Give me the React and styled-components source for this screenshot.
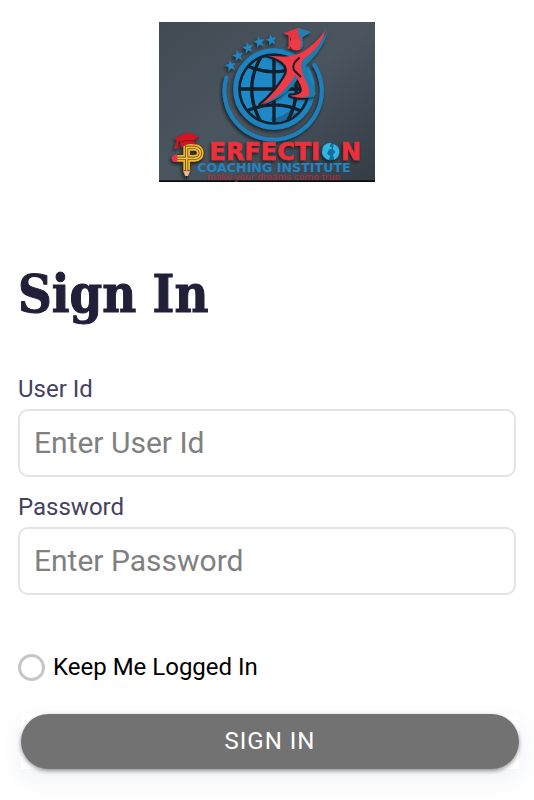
import React, {useState} from 'react';
import styled, {createGlobalStyle} from 'styled-components';

const GlobalStyle = createGlobalStyle`
  * {
    box-sizing: border-box;
  }
  body {
    margin: 0;
    background: #ffffff;
    font-family: Roboto, 'Liberation Sans', sans-serif;
  }
`;

const Page = styled.main`
  padding: 22px 18px 32px;
`;

const Logo = styled.svg`
  display: block;
  width: 216px;
  height: 160px;
  margin: 0 auto;
`;

const Title = styled.h1`
  margin: 76px 0 44px;
  font-family: 'Roboto Slab', 'DejaVu Serif Condensed', 'DejaVu Serif', serif;
  font-size: 52px;
  font-weight: 700;
  line-height: 72px;
  color: #222039;
  -webkit-text-stroke: 1px #222039;
`;

const Field = styled.div`
  display: flex;
  flex-direction: column;
  margin-bottom: 15px;
`;

const Label = styled.label`
  font-size: 24px;
  line-height: 30px;
  margin-bottom: 5px;
  color: #444260;
`;

const TextInput = styled.input`
  width: 100%;
  height: 68px;
  padding: 0 14px 2px;
  border: 2px solid #e4e4e4;
  border-radius: 10px;
  background: #ffffff;
  font-family: inherit;
  font-size: 30px;
  color: #222039;
  outline: none;
  &::placeholder {
    color: #808080;
    opacity: 1;
  }
`;

const KeepRow = styled.label`
  display: flex;
  align-items: center;
  gap: 8px;
  margin-top: 56px;
  font-size: 24px;
  line-height: 32px;
  color: #000000;
`;

const RoundCheck = styled.input`
  appearance: none;
  width: 27px;
  height: 27px;
  margin: 0;
  border: 3px solid #c6c6c6;
  border-radius: 50%;
  background: #ffffff;
  &:checked {
    background: #727272;
  }
`;

const Actions = styled.div`
  margin: 31px -3px 0 3px;
  background: #ffffff;
  box-shadow: 0 8px 24px rgba(120, 140, 190, 0.13);
`;

const SubmitButton = styled.button`
  display: block;
  width: 100%;
  height: 55px;
  padding: 0 0 2px;
  border: 0;
  border-radius: 28px;
  background: #727272;
  box-shadow: 0 2px 4px rgba(0, 0, 0, 0.4);
  font-family: inherit;
  font-size: 24px;
  letter-spacing: 1px;
  text-transform: uppercase;
  color: #ffffff;
`;

const STAR = 'M0-17 4-6 16-5 7 3 10 15 0 8-10 15-7 3-16-5-4-6Z';
const stars = [
  [239, 152],
  [261, 122],
  [291, 98],
  [325, 81],
  [361, 75],
];

const InstituteLogo = () => (
  <Logo viewBox="24 21 648 480" role="img" aria-label="Perfection Coaching Institute">
    <defs>
      <linearGradient id="slate" x1="0" y1="0" x2="1" y2="1">
        <stop offset="0" stopColor="#414b54" />
        <stop offset="0.5" stopColor="#4a555f" />
        <stop offset="1" stopColor="#343c45" />
      </linearGradient>
      <filter id="drop" x="-10%" y="-10%" width="120%" height="125%">
        <feDropShadow dx="-4" dy="6" stdDeviation="4" floodColor="#0c1219" floodOpacity="0.8" />
      </filter>
      <clipPath id="globe">
        <circle cx="369" cy="222" r="100" />
      </clipPath>
    </defs>
    <rect x="24" y="21" width="648" height="480" fill="url(#slate)" />
    <rect x="24" y="496" width="648" height="5" fill="#07090c" />

    <g filter="url(#drop)">
      {stars.map(([x, y]) => (
        <path key={x} d={STAR} fill="#2386c2" transform={`translate(${x} ${y}) rotate(-12)`} />
      ))}
      <path
        d="M226 188A146 146 0 1 0 490 150"
        fill="none"
        stroke="#1b80bd"
        strokeWidth="12"
        strokeLinecap="round"
      />
      <circle cx="369" cy="222" r="115" fill="#18232d" stroke="#1d83c0" strokeWidth="15" />
    </g>
    <g clipPath="url(#globe)">
      <circle cx="369" cy="222" r="100" fill="#1f88c6" />
      <path d="M360 309Q390 312 424 280L445 320 369 330Z" fill="#17699f" />
      <g fill="none" stroke="#131f2a" strokeWidth="10">
        <path d="M369 118V326M262 222H475" />
        <path d="M335 118Q269 222 335 330M403 118Q469 222 403 330" />
        <path d="M285 151Q369 190 453 151M281 291Q369 248 457 291" />
      </g>
    </g>

    {/* dark edge keeps the figure apart from the globe */}
    <path
      d="M524 46C511 90 486 113 455 135C446 151 454 178 463 194C474 213 476 233 474 242C463 248 440 250 418 242C443 241 457 234 452 220C449 204 439 194 433 180C413 216 382 250 329 269C358 247 392 206 406 177C417 151 387 130 346 121C382 127 410 127 433 120C475 106 501 74 524 46Z"
      fill="none"
      stroke="#18232d"
      strokeWidth="14"
      strokeLinejoin="round"
      clipPath="url(#globe)"
    />
    <g filter="url(#drop)">
      <path
        d="M524 52C508 101 486 124 459 151C456 181 484 211 488 238C485 248 462 250 439 247C458 240 467 231 462 221C452 205 444 195 438 184C421 219 382 252 329 269C360 250 395 206 406 177C417 151 387 130 348 123C384 126 416 127 435 121C475 112 501 76 524 52Z"
        fill="#1b7bad"
        transform="translate(6 0)"
      />
      <path
        d="M524 46C511 90 486 113 455 135C446 151 454 178 463 194C474 213 476 233 474 242C463 248 440 250 418 242C443 241 457 234 452 220C449 204 439 194 433 180C413 216 382 250 329 269C358 247 392 206 406 177C417 151 387 130 346 121C382 127 410 127 433 120C475 106 501 74 524 46Z"
        fill="#ee3a46"
      />
      <path d="M446 128Q420 146 429 166L450 186" fill="none" stroke="#251d2a" strokeWidth="6" />
      <circle cx="436" cy="86" r="20" fill="#ee3a46" />
      <path d="M446 68Q464 80 452 99L446 103Q456 84 446 68Z" fill="#1b7bad" />
      <path d="M398 55 440 39 481 51 454 66V76Q437 66 421 76L417 63Z" fill="#e53642" />
      <path d="M440 39 481 51 454 66V76L446 69Z" fill="#1b83b5" />
      <path d="M413 60V94L409 100 417 101V62Z" fill="#e53642" />
    </g>

    <g filter="url(#drop)">
      <text
        x="508"
        y="434"
        textAnchor="end"
        fontFamily="'DejaVu Sans', sans-serif"
        fontSize="72"
        fontWeight="700"
        fill="#e9303b"
        stroke="#e9303b"
        strokeWidth="2"
      >
        ERFECTI
      </text>
      <text
        x="571"
        y="434"
        fontFamily="'DejaVu Sans', sans-serif"
        fontSize="72"
        fontWeight="700"
        fill="#e9303b"
        stroke="#e9303b"
        strokeWidth="2"
      >
        N
      </text>
      <circle cx="538" cy="410" r="26" fill="#0e6f9e" />
      <path
        d="M516 396Q524 383 541 384L536 394 544 400 533 405 528 416 538 423 533 435Q516 427 513 413ZM548 387Q566 394 565 413Q562 428 550 434L546 419 553 411 546 402Z"
        fill="#35b4e0"
      />

      {/* pencil bent into the letter P */}
      <path d="M107 466V397H131Q148 400 148 414Q148 429 130 430H78" fill="none" stroke="#3a2a12" strokeWidth="24" />
      <path d="M107 466V397H131Q148 400 148 414Q148 429 130 430H78" fill="none" stroke="#efb62f" strokeWidth="20" />
      <path d="M107 466V397H131Q148 400 148 414Q148 429 130 430H78" fill="none" stroke="#4c3510" strokeWidth="9" />
      <path d="M107 466V397H131Q148 400 148 414Q148 429 130 430H78" fill="none" stroke="#f5c345" strokeWidth="5" />
      <path d="M79 419H70Q62 423 62 430Q62 438 70 441H79Z" fill="#e93245" />
      <path d="M96 466Q101 472 107 466Q113 472 118 466L107 493Z" fill="#f2b494" />
      <path d="M103 483 107 494 111 483Z" fill="#251919" />
      <path d="M70 370 110 352 144 365 127 378 135 389Q109 382 91 399L87 382Z" fill="#cf1820" />
      <path d="M87 382Q106 373 127 378L144 365" fill="none" stroke="#83131a" strokeWidth="3" />
      <path d="M78 374 74 389 69 402 82 398 81 376Z" fill="#cf1820" />
    </g>

    <text
      x="369"
      y="472"
      textAnchor="middle"
      fontFamily="'DejaVu Sans', sans-serif"
      fontSize="38"
      fontWeight="700"
      fill="#2384c2"
    >
      COACHING INSTITUTE
    </text>
    <text
      x="367"
      y="495"
      textAnchor="middle"
      fontFamily="'DejaVu Sans', sans-serif"
      fontSize="27"
      fill="#b52a37"
    >
      make your dreams come true
    </text>
  </Logo>
);

const App = () => {
  const [userId, setUserId] = useState('');
  const [password, setPassword] = useState('');
  const [keep, setKeep] = useState(false);

  return (
    <>
      <GlobalStyle />
      <Page>
        <InstituteLogo />
        <Title>Sign In</Title>
        <form onSubmit={event => event.preventDefault()}>
          <Field>
            <Label htmlFor="userId">User Id</Label>
            <TextInput
              id="userId"
              type="text"
              placeholder="Enter User Id"
              value={userId}
              onChange={event => setUserId(event.target.value)}
            />
          </Field>
          <Field>
            <Label htmlFor="password">Password</Label>
            <TextInput
              id="password"
              type="password"
              placeholder="Enter Password"
              value={password}
              onChange={event => setPassword(event.target.value)}
            />
          </Field>
          <KeepRow>
            <RoundCheck
              type="checkbox"
              checked={keep}
              onChange={event => setKeep(event.target.checked)}
            />
            Keep Me Logged In
          </KeepRow>
          <Actions>
            <SubmitButton type="submit">Sign In</SubmitButton>
          </Actions>
        </form>
      </Page>
    </>
  );
};

export default App;
